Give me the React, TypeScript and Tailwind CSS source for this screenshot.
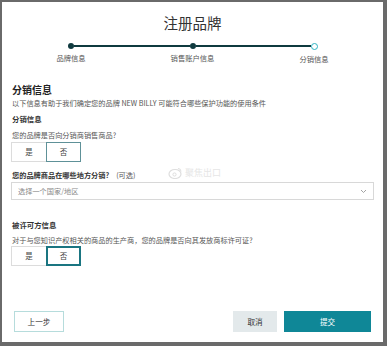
import React from "react";

const font = { fontFamily: '"Noto Sans CJK SC", "Noto Sans", sans-serif' };

function Step({ label, last }: { label: string; last?: boolean }) {
  return (
    <div className="flex w-[6px] flex-col items-center">
      {last ? (
        <div className="h-[7px] w-[7px] shrink-0 rounded-full border-[1.5px] border-[#2fb3c2] bg-white" />
      ) : (
        <div className="h-[6px] w-[6px] shrink-0 rounded-full bg-[#0f3a3f]" />
      )}
      <div className="mt-[4px] whitespace-nowrap text-[7.3px] leading-[10px] text-[#555]">{label}</div>
    </div>
  );
}

function YesNo({ strong }: { strong?: boolean }) {
  return (
    <div className="flex h-[20px] w-[70px]">
      <div className="flex h-full w-[35px] items-center justify-center border border-r-0 border-[#dcdcdc] text-[7.5px] text-[#444]">
        是
      </div>
      {strong ? (
        <div className="flex h-full w-[35px] items-center justify-center border-2 border-[#1a7581] text-[7.5px] text-[#444]">
          否
        </div>
      ) : (
        <div className="flex h-full w-[35px] items-center justify-center border border-[#5e9198] text-[7.5px] text-[#444]">
          否
        </div>
      )}
    </div>
  );
}

export default function App() {
  return (
    <div className="h-[346px] w-[387px] bg-[#6a6a6a] pb-[4px] pl-[2px] pr-[4px] pt-[2px]" style={font}>
      <div className="flex h-[340px] w-[381px] flex-col bg-white pb-[10px]">
        <div className="mt-[12px] text-center text-[14.5px] leading-[18px] text-[#333]">注册品牌</div>

        <div className="mt-[11px] flex items-start px-[66px]">
          <Step label="品牌信息" />
          <div className="mt-[2px] h-[2px] flex-1 bg-[#0f3a3f]" />
          <Step label="销售账户信息" />
          <div className="mt-[2px] h-[2px] flex-1 bg-[#0f3a3f]" />
          <Step label="分销信息" last />
        </div>

        <div className="flex flex-col px-[9px]">
          <div className="ml-[1px] mt-[21px] text-[10px] font-bold leading-[10px] text-[#222]">分销信息</div>
          <div className="ml-[1px] mt-[3.5px] text-[7.2px] leading-[9px] text-[#555]">
            以下信息有助于我们确定您的品牌 NEW BILLY 可能符合哪些保护功能的使用条件
          </div>

          <div className="ml-[1px] mt-[6.5px] text-[7.4px] font-bold leading-[10px] text-[#333]">分销信息</div>
          <div className="ml-[1px] mt-[6px] text-[7.2px] leading-[10px] text-[#555]">您的品牌是否向分销商销售商品?</div>
          <div className="mt-[2px]">
            <YesNo />
          </div>

          <div className="relative ml-[1px] mt-[8px] flex items-center text-[7.2px] leading-[10px]">
            <span className="font-bold text-[#333]">您的品牌商品在哪些地方分销?</span>
            <span className="ml-[7px] text-[#555]">(可选)</span>
            <div className="absolute left-[156px] top-[-3px] flex items-center gap-[3px] text-[#e4e4e4]">
              <svg width="14" height="12" viewBox="0 0 14 12">
                <ellipse cx="7" cy="7" rx="6" ry="4.5" fill="none" stroke="#dedede" strokeWidth="1.2" />
                <circle cx="6.5" cy="7.5" r="1.6" fill="none" stroke="#dedede" strokeWidth="1" />
                <path d="M10 1.5 a3 3 0 0 1 3 3" fill="none" stroke="#dedede" strokeWidth="1" />
              </svg>
              <span className="text-[9px] text-[#e6e6e6]">聚焦出口</span>
            </div>
          </div>
          <div className="mt-[2px] flex h-[18px] items-center justify-between border border-[#d8d8d8] px-[6px]">
            <span className="text-[7.2px] text-[#888]">选择一个国家/地区</span>
            <svg width="7" height="5" viewBox="0 0 7 5">
              <path d="M1 1 L3.5 3.5 L6 1" fill="none" stroke="#999" strokeWidth="0.9" />
            </svg>
          </div>

          <div className="ml-[1px] mt-[20px] text-[7.4px] font-bold leading-[10px] text-[#333]">被许可方信息</div>
          <div className="ml-[1px] mt-[5px] text-[7.2px] leading-[10px] text-[#555]">
            对于与您知识产权相关的商品的生产商，您的品牌是否向其发放商标许可证?
          </div>
          <div className="mt-[1px]">
            <YesNo strong />
          </div>
        </div>

        <div className="mt-auto flex items-center justify-between px-[12px]">
          <div className="flex h-[21px] w-[50px] items-center justify-center border border-[#b6dcdc] text-[7.6px] text-[#333]">
            上一步
          </div>
          <div className="flex items-center gap-[7px]">
            <div className="flex h-[21px] w-[44px] items-center justify-center bg-[#e3e9eb] text-[7.6px] text-[#333]">
              取消
            </div>
            <div className="flex h-[21px] w-[87px] items-center justify-center bg-[#0f8797] text-[7.6px] text-white">
              提交
            </div>
          </div>
        </div>
      </div>
    </div>
  );
}
